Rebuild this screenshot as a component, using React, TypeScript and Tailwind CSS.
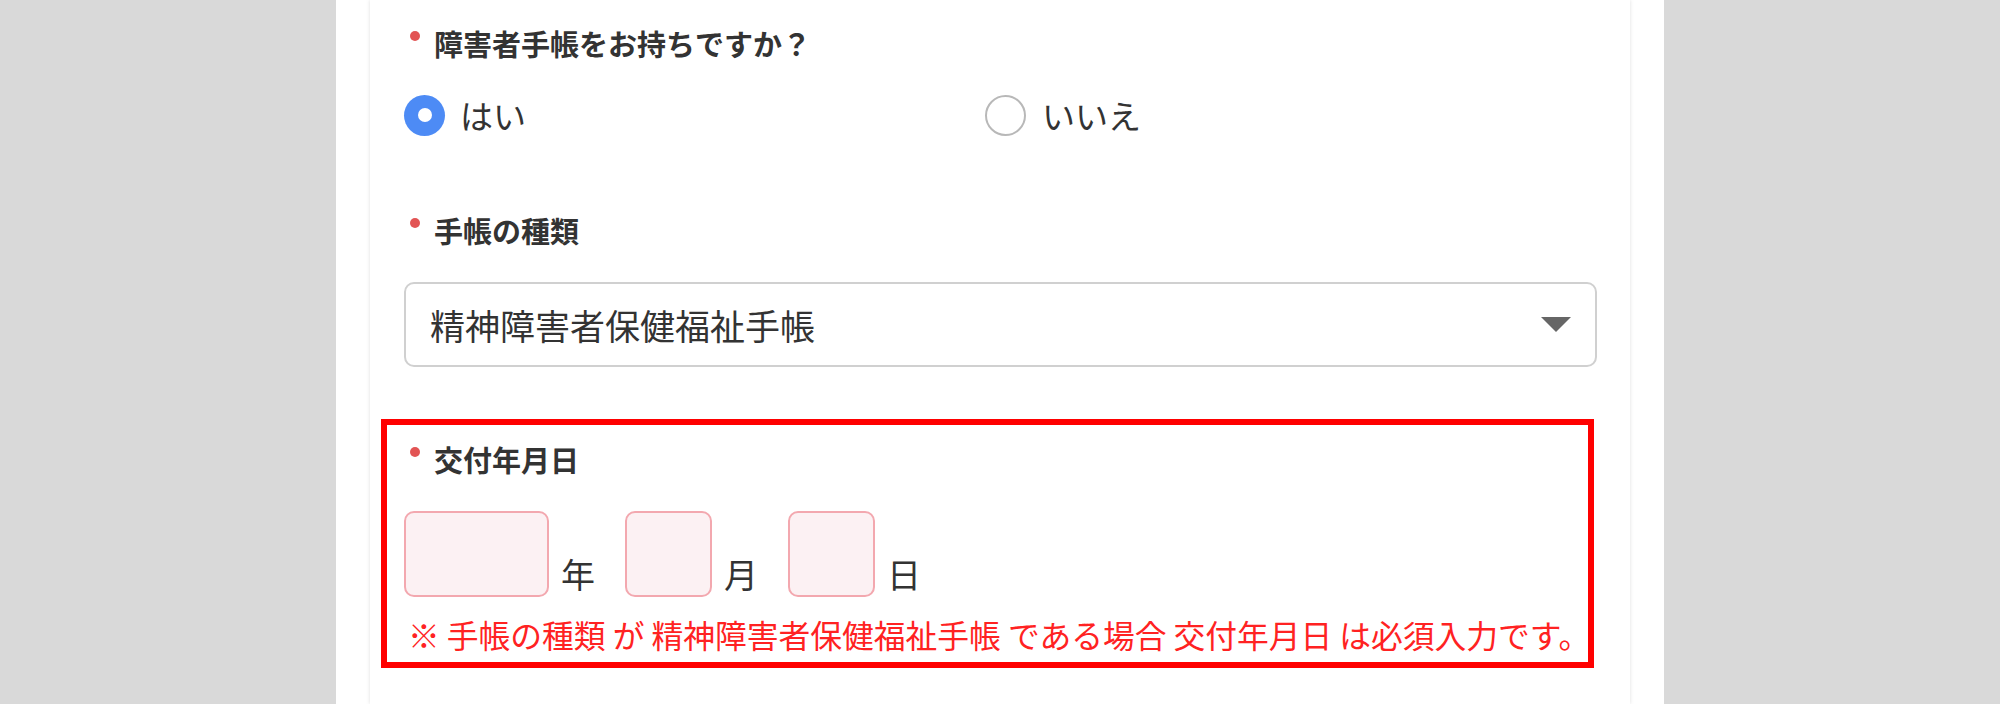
import React from "react";

const font = {
  fontFamily: '"Noto Sans CJK JP", "Noto Sans", sans-serif',
};

function Label({ text }: { text: string }) {
  return (
    <div className="flex items-center h-[42px]">
      <span className="w-[10px] h-[10px] rounded-full bg-[#e25454] ml-[6px] mr-[14px] mb-[14px] shrink-0" />
      <span className="text-[29px] font-bold text-[#333333] leading-none whitespace-nowrap">
        {text}
      </span>
    </div>
  );
}

function DateBox({ w }: { w: string }) {
  return (
    <div
      className={`${w} h-[86px] rounded-[10px] border-2 border-[#f3a8af] bg-[#fcf1f3] shrink-0`}
    />
  );
}

export default function App() {
  return (
    <div
      className="w-full h-[704px] bg-[#d9d9d9] flex justify-center overflow-hidden"
      style={font}
    >
      <div className="w-[1328px] h-full bg-white px-[34px] shrink-0">
        <div className="h-full bg-white shadow-[0_0_4px_rgba(0,0,0,0.13)] pl-[34px] pr-[33px] pt-[22px]">
          <Label text="障害者手帳をお持ちですか？" />

          <div className="mt-[30px] h-[42px] flex items-center">
            <div className="w-[581px] flex items-center">
              <span className="w-[41px] h-[41px] rounded-full bg-[#4d8bf5] flex items-center justify-center shrink-0">
                <span className="w-[14px] h-[14px] rounded-full bg-white" />
              </span>
              <span className="ml-[15px] text-[33px] leading-none text-[#333333]">
                はい
              </span>
            </div>
            <div className="flex items-center">
              <span className="w-[41px] h-[41px] rounded-full border-2 border-[#b8b8b8] bg-white shrink-0" />
              <span className="ml-[16px] text-[33px] leading-none text-[#333333]">
                いいえ
              </span>
            </div>
          </div>

          <div className="mt-[73px]">
            <Label text="手帳の種類" />
          </div>

          <div className="mt-[31px] h-[85px] rounded-[10px] border-2 border-[#d0d0d0] flex items-center justify-between pl-[24px] pr-[24px]">
            <span className="text-[35px] leading-none text-[#333333] whitespace-nowrap">
              精神障害者保健福祉手帳
            </span>
            <svg width="30" height="15" viewBox="0 0 30 15">
              <polygon points="0,0 30,0 15,15" fill="#666666" />
            </svg>
          </div>

          <div className="relative mt-[71px]">
            <Label text="交付年月日" />
            <div className="mt-[31px] h-[86px] flex items-end">
              <DateBox w="w-[145px]" />
              <span className="ml-[12px] mb-[6px] text-[34px] leading-none text-[#333333]">
                年
              </span>
              <div className="ml-[30px]">
                <DateBox w="w-[87px]" />
              </div>
              <span className="ml-[12px] mb-[6px] text-[34px] leading-none text-[#333333]">
                月
              </span>
              <div className="ml-[30px]">
                <DateBox w="w-[87px]" />
              </div>
              <span className="ml-[12px] mb-[6px] text-[34px] leading-none text-[#333333]">
                日
              </span>
            </div>
            <div className="mt-[17px] h-[41px] flex items-center pl-[4px] text-[31.75px] leading-none text-[#ff2222] whitespace-nowrap">
              ※ 手帳の種類 が 精神障害者保健福祉手帳 である場合 交付年月日 は必須入力です。
            </div>
            <div className="absolute -top-[19px] -left-[23px] right-[3px] -bottom-[13px] border-[6px] border-[#ff0000] pointer-events-none" />
          </div>
        </div>
      </div>
    </div>
  );
}
